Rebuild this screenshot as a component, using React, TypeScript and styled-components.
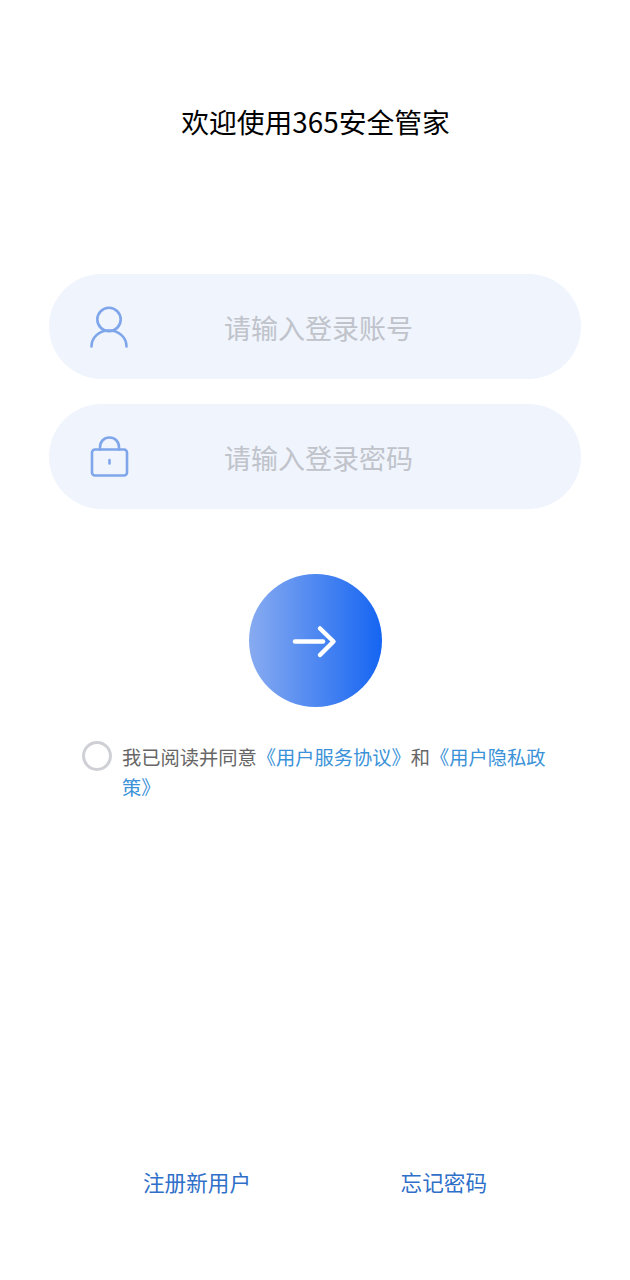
import React from "react";
import styled, { createGlobalStyle } from "styled-components";

const CJK = `"Noto Sans CJK SC", "Noto Sans", sans-serif`;

const GlobalStyle = createGlobalStyle`
    html, body {
        margin: 0;
        padding: 0;
        background: #ffffff;
    }
`;

const Page = styled.div`
    width: 630px;
    height: 1280px;
    overflow: hidden;
    display: flex;
    flex-direction: column;
    align-items: center;
    font-family: ${CJK};
`;

const Title = styled.h1`
    margin: 101px 0 0 1px;
    height: 40px;
    line-height: 40px;
    font-size: 27.8px;
    font-weight: 400;
    color: #000000;
`;

const Form = styled.div`
    margin: 133px 0 0 0;
    display: flex;
    flex-direction: column;
    gap: 25px;
`;

const Field = styled.div`
    width: 532px;
    height: 105px;
    box-sizing: border-box;
    padding-left: 39px;
    border-radius: 52.5px;
    background: #eff4fd;
    display: flex;
    align-items: center;
`;

const FieldIcon = styled.svg`
    width: 42px;
    height: 48px;
    flex: none;
    fill: none;
    stroke: #7fa5ea;
    stroke-width: 2.6;
    stroke-linecap: round;
    stroke-linejoin: round;
`;

const Placeholder = styled.span`
    margin: 3px 0 0 94px;
    font-size: 27px;
    line-height: 40px;
    color: #c0c3ca;
`;

const SubmitButton = styled.button`
    all: unset;
    margin-top: 65px;
    width: 133px;
    height: 133px;
    border-radius: 50%;
    background: linear-gradient(90deg, #88abf0 0%, #1565f2 100%);
    display: grid;
    place-items: center;
`;

const Agreement = styled.div`
    width: 466px;
    margin: 34px 0 0 0;
    display: flex;
    align-items: flex-start;
    gap: 10px;
`;

const Radio = styled.span`
    width: 30px;
    height: 30px;
    box-sizing: border-box;
    flex: none;
    border: 3px solid #cfd0d5;
    border-radius: 50%;
`;

const AgreementText = styled.p`
    margin: 1px 0 0;
    font-size: 19.25px;
    line-height: 30px;
    color: #666666;
`;

const Link = styled.span`
    color: #3b92d8;
`;

const Footer = styled.div`
    margin-top: auto;
    margin-bottom: 82px;
    width: 344px;
    display: flex;
    justify-content: space-between;
`;

const FooterLink = styled.a`
    font-size: 21.6px;
    line-height: 32px;
    color: #2f6fc9;
`;

export default function App() {
    return (
        <Page>
            <GlobalStyle />
            <Title>欢迎使用365安全管家</Title>
            <Form>
                <Field>
                    <FieldIcon viewBox="0 0 42 48">
                        <circle cx="21" cy="16.500" r="11.700" />
                        <path d="M3.500 43.500C3.500 34.500 11 27.500 21 27.500S38.500 34.500 38.500 43.500" />
                    </FieldIcon>
                    <Placeholder>请输入登录账号</Placeholder>
                </Field>
                <Field>
                    <FieldIcon viewBox="0 0 42 48">
                        <rect x="4" y="16.500" width="35" height="26" rx="3" />
                        <path d="M12 16.500V14.500C12 8.500 16 4.500 21.500 4.500S31 8.500 31 14.500V16.500" />
                        <path d="M21.500 27V30.500" />
                    </FieldIcon>
                    <Placeholder>请输入登录密码</Placeholder>
                </Field>
            </Form>
            <SubmitButton>
                <svg width="46" height="36" viewBox="0 0 46 36" fill="none" stroke="#ffffff" strokeWidth="4.500" strokeLinecap="round" strokeLinejoin="round">
                    <path d="M3 18.500H31" />
                    <path d="M28 5.500L41.500 18.500L28 32" />
                </svg>
            </SubmitButton>
            <Agreement>
                <Radio />
                <AgreementText>
                    我已阅读并同意<Link>《用户服务协议》</Link>和<Link>《用户隐私政策》</Link>
                </AgreementText>
            </Agreement>
            <Footer>
                <FooterLink>注册新用户</FooterLink>
                <FooterLink>忘记密码</FooterLink>
            </Footer>
        </Page>
    );
}
